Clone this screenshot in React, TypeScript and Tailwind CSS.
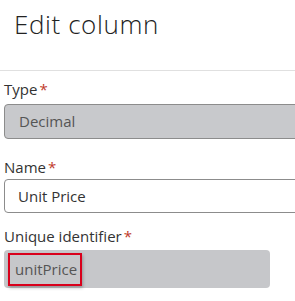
import React from 'react';

const Label: React.FC<{ text: string }> = ({ text }) => (
  <div className="flex items-start h-[20px] text-[15px] leading-[20px] text-[#333]">
    {text}
    <span className="ml-[2px] text-[#c0392b] text-[15px]">*</span>
  </div>
);

export default function App() {
  return (
    <div className="w-[295px] h-[301px] bg-white overflow-hidden font-['Open_Sans',sans-serif]">
      {/* Header */}
      <div className="h-[71px] pl-[14px] pt-[7px] border-b border-[#e0e0e0]">
        <h1 className="text-[26px] leading-[34px] font-light text-[#222] tracking-[0.6px]">Edit column</h1>
      </div>

      <div className="pl-[4px] pt-[8px] flex flex-col">
        <Label text="Type" />
        <div className="mt-[5px] h-[35px] w-[300px] flex items-center pl-[14px] bg-[#c8c9cc] border border-[#8c8c8c] rounded-l-[4px] text-[15px] text-[#555]">
          Decimal
        </div>

        <div className="mt-[18px]">
          <Label text="Name" />
        </div>
        <div className="mt-[2px] h-[34px] w-[300px] flex items-center pl-[13px] bg-white border border-[#8c8c8c] rounded-l-[4px] text-[15px] text-[#333]">
          Unit Price
        </div>

        <div className="mt-[13px]">
          <Label text="Unique identifier" />
        </div>
        <div className="mt-[4px] h-[38px] w-[266px] flex items-center pl-[4px] bg-[#c6c7ca] rounded-[4px]">
          <div className="h-[33px] w-[74px] flex items-center pl-[5px] border-2 border-[#d9001b] shadow-[1px_2px_3px_rgba(0,0,0,0.25)] text-[15px] text-[#555]">
            unitPrice
          </div>
        </div>
      </div>
    </div>
  );
}
